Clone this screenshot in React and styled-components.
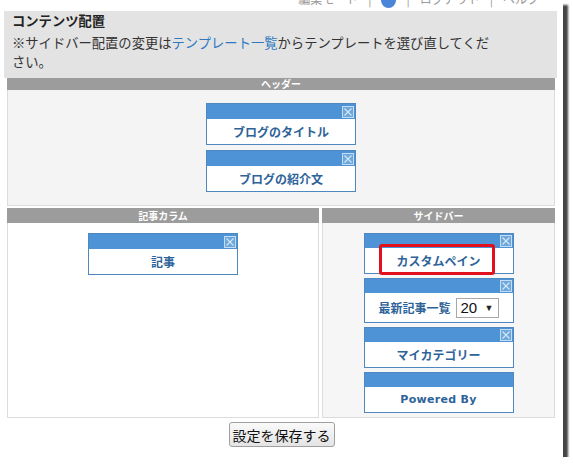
import React from "react";
import styled, { createGlobalStyle } from "styled-components";

const Global = createGlobalStyle`
  html, body { margin: 0; padding: 0; background: #fff; }
  body { font-family: "Noto Sans CJK JP", "Noto Sans", sans-serif; }
`;

const Frame = styled.div`
  width: 563px;
  height: 457px;
  background: #fff;
  box-shadow: 5px 5px 2px rgba(35, 35, 35, 0.85);
  display: flex;
  flex-direction: column;
  overflow: hidden;
`;

const TopLinks = styled.div`
  height: 11px;
  overflow: hidden;
  display: flex;
  justify-content: flex-end;
  align-items: flex-start;
  gap: 10px;
  padding-right: 24px;
  color: #9a9a9a;
  font-size: 12px;
  line-height: 16px;
  flex-shrink: 0;
`;

const TopItem = styled.span`
  margin-top: -9px;
  display: inline-flex;
  align-items: center;
`;

const Globe = styled.span`
  display: inline-block;
  width: 15px;
  height: 15px;
  border-radius: 50%;
  background: #4a86d8;
  margin-top: -7px;
`;

const Panel = styled.div`
  margin-left: 4px;
  width: 545px;
  background: #e3e3e3;
  padding: 0 0 7px 8px;
  color: #222;
`;

const Title = styled.div`
  font-size: 13.3px;
  font-weight: 700;
  line-height: 20px;
`;

const Note = styled.div`
  margin-top: 2px;
  font-size: 13.3px;
  line-height: 19px;
  color: #333;
  padding-right: 62px;
`;

const NoteLink = styled.a`
  color: #2d79c2;
  text-decoration: none;
`;

const Board = styled.div`
  margin-left: 7px;
  width: 548px;
  display: grid;
  grid-template-columns: 312px 233px;
  column-gap: 3px;
  row-gap: 2px;
`;

const Section = styled.div`
  grid-column: ${(p) => (p.$full ? "1 / -1" : "auto")};
  display: flex;
  flex-direction: column;
`;

const SectionBar = styled.div`
  height: ${(p) => p.$h}px;
  background: #9c9c9c;
  color: #fff;
  font-size: 10px;
  font-weight: 700;
  line-height: ${(p) => p.$h}px;
  text-align: center;
`;

const SectionBody = styled.div`
  flex: 1;
  background: ${(p) => p.$bg};
  border: 1px solid #dcdcdc;
  border-top: none;
  padding: ${(p) => p.$pad};
  display: flex;
  flex-direction: column;
  align-items: center;
  gap: ${(p) => p.$gap}px;
`;

const Widget = styled.div`
  width: 148px;
  border: 1px solid #4e88bf;
  background: #fff;
`;

const WidgetBar = styled.div`
  height: ${(p) => p.$h}px;
  background: #4d93d5;
  display: flex;
  justify-content: flex-end;
  align-items: center;
  padding-right: 1px;
`;

const WidgetBody = styled.div`
  position: relative;
  height: ${(p) => p.$h || 25}px;
  display: flex;
  align-items: center;
  justify-content: center;
  gap: 5px;
  font-size: ${(p) => (p.$latin ? "11px" : "12px")};
  font-weight: 700;
  color: #2e6399;
  font-family: ${(p) =>
    p.$latin
      ? '"DejaVu Sans", Verdana, sans-serif'
      : '"Noto Sans CJK JP", "Noto Sans", sans-serif'};
  letter-spacing: ${(p) => (p.$latin ? "0.3px" : "0")};
`;

const Highlight = styled.div`
  position: absolute;
  left: 14px;
  right: 18px;
  top: -4px;
  bottom: -2px;
  border: 3px solid #e2101c;
  border-radius: 3px;
  pointer-events: none;
`;

const FakeSelect = styled.span`
  display: inline-flex;
  align-items: center;
  justify-content: space-between;
  width: 43px;
  height: 20px;
  padding: 0 4px 0 4px;
  box-sizing: border-box;
  border: 1px solid #a8a8a8;
  background: #fff;
  color: #111;
  font-family: "Liberation Sans", Arial, sans-serif;
  font-weight: 400;
  font-size: 15px;
`;

const Caret = styled.span`
  font-size: 9px;
  color: #222;
`;

const SaveRow = styled.div`
  display: flex;
  justify-content: center;
  padding-top: 4px;
`;

const SaveButton = styled.button`
  height: 25px;
  padding: 0 3px;
  border: 1px solid #9f9f9f;
  border-radius: 3px;
  background: linear-gradient(#fafafa, #e4e4e4);
  font-family: "Noto Sans CJK JP", sans-serif;
  font-size: 14px;
  color: #111;
  line-height: 22px;
`;

function CloseIcon() {
  return (
    <svg width="12" height="12" viewBox="0 0 12 12">
      <rect x="0.5" y="0.5" width="11" height="11" fill="#6aa8de" stroke="#c5dcf1" />
      <path d="M2.5 2.5 L9.5 9.5 M9.5 2.5 L2.5 9.5" stroke="#d4e6f6" strokeWidth="1.2" />
    </svg>
  );
}

function Pane({ children, closable = true, h, bar = 14, latin, highlight }) {
  return (
    <Widget>
      <WidgetBar $h={bar}>{closable && <CloseIcon />}</WidgetBar>
      <WidgetBody $h={h} $latin={latin}>
        {children}
        {highlight && <Highlight />}
      </WidgetBody>
    </Widget>
  );
}

export default function App() {
  return (
    <>
      <Global />
      <Frame>
        <TopLinks>
          <TopItem>編集モード</TopItem>
          <TopItem>|</TopItem>
          <Globe />
          <TopItem>|</TopItem>
          <TopItem>ログアウト</TopItem>
          <TopItem>|</TopItem>
          <TopItem>ヘルプ</TopItem>
        </TopLinks>
        <Panel>
          <Title>コンテンツ配置</Title>
          <Note>
            ※サイドバー配置の変更は<NoteLink href="#">テンプレート一覧</NoteLink>
            からテンプレートを選び直してください。
          </Note>
        </Panel>
        <Board>
          <Section $full>
            <SectionBar $h={12}>ヘッダー</SectionBar>
            <SectionBody $bg="#f4f4f4" $pad="13px 0 13px" $gap={5}>
              <Pane bar={15}>ブログのタイトル</Pane>
              <Pane bar={15}>ブログの紹介文</Pane>
            </SectionBody>
          </Section>
          <Section>
            <SectionBar $h={15}>記事カラム</SectionBar>
            <SectionBody $bg="#ffffff" $pad="10px 0 6px" $gap={4}>
              <Pane bar={15}>記事</Pane>
            </SectionBody>
          </Section>
          <Section>
            <SectionBar $h={15}>サイドバー</SectionBar>
            <SectionBody $bg="#f6f6f6" $pad="10px 0 4px" $gap={4}>
              <Pane highlight>カスタムペイン</Pane>
              <Pane h={29}>
                最新記事一覧
                <FakeSelect>
                  20 <Caret>▼</Caret>
                </FakeSelect>
              </Pane>
              <Pane>マイカテゴリー</Pane>
              <Pane closable={false} latin>
                Powered By
              </Pane>
            </SectionBody>
          </Section>
        </Board>
        <SaveRow>
          <SaveButton>設定を保存する</SaveButton>
        </SaveRow>
      </Frame>
    </>
  );
}
